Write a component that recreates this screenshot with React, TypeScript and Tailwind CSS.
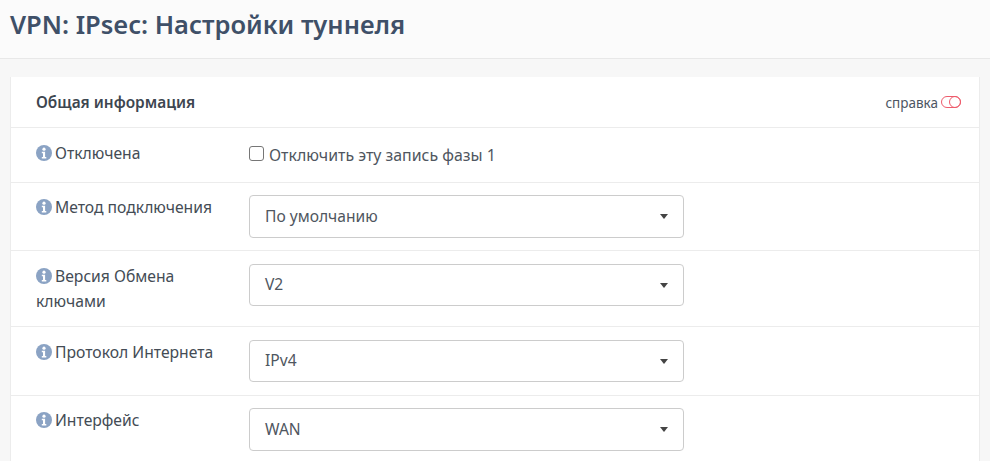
const font = "font-['Noto_Sans','Liberation_Sans',sans-serif]";

function InfoIcon() {
  return (
    <svg viewBox="0 0 16 16" className="inline-block w-4 h-4 mr-[3px] align-[-2px]">
      <circle cx="8" cy="8" r="8" fill="#8ba3c4" />
      <circle cx="8" cy="4.2" r="1.6" fill="#fff" />
      <path d="M5.8 6.8h3.3v5.1h1.2v1.5H5.8v-1.5h1.2V8.3H5.8z" fill="#fff" />
    </svg>
  );
}

function Label({ children }: { children: React.ReactNode }) {
  return (
    <div className="w-[213px] shrink-0 pr-4 text-[15.7px] leading-[25px] text-[#444c55]">
      <InfoIcon />
      {children}
    </div>
  );
}

function Select({ value }: { value: string }) {
  return (
    <div className="w-[435px] h-full flex items-center justify-between border border-[#ccc] rounded bg-white pl-[15px] pr-[15px] text-[15.6px] text-[#4f5660]">
      <span>{value}</span>
      <span className="w-0 h-0 border-x-4 border-x-transparent border-t-[5px] border-t-[#444]" />
    </div>
  );
}

const rows = [
  { label: "Метод подключения", value: "По умолчанию", h: "h-[68px]", pt: "pt-3", sh: "h-[43px]" },
  { label: "Версия Обмена ключами", value: "V2", h: "h-[76px]", pt: "pt-[13px]", sh: "h-[42px]" },
  { label: "Протокол Интернета", value: "IPv4", h: "h-[69px]", pt: "pt-[13px]", sh: "h-[42px]" },
  { label: "Интерфейс", value: "WAN", h: "h-[70px]", pt: "pt-3", sh: "h-[43px]" },
];

export default function App() {
  return (
    <div className={`${font} w-[990px] h-[461px] overflow-hidden bg-[#f7f7f7]`}>
      <div className="h-[59px] bg-[#fbfbfb] border-b border-[#e8e8e8] pl-[10px] flex items-center">
        <h1 className="text-[25.5px] font-semibold text-[#3f5068] leading-none pb-[8px]">
          VPN: IPsec: Настройки туннеля
        </h1>
      </div>
      <div className="mt-[18px] ml-[10px] w-[970px] bg-white border-x border-[#ececec]">
        <div className="h-[51px] border-b border-[#ececec] pl-[25px] pr-[18px] pt-[2px] flex items-center justify-between">
          <span className="text-[15.4px] font-semibold text-[#3d4650]">Общая информация</span>
          <div className="flex items-center text-[13.5px] text-[#4d5663]">
            <span>справка</span>
            <span className="relative ml-[3px] mb-[2px] w-[20px] h-[12px] rounded-full border border-[#ee5c6c]">
              <span className="absolute right-[-1px] top-[-1px] w-[12px] h-[12px] rounded-full border border-[#ee5c6c]" />
            </span>
          </div>
        </div>
        <div className="h-[55px] border-b border-[#ececec] pl-[25px] pt-[13px] flex">
          <Label>Отключена</Label>
          <label className="flex items-start text-[15.9px] text-[#4f5660] pt-[3px]">
            <input type="checkbox" className="w-[15px] h-[15px] mt-[2px] mr-[5px] appearance-none border border-[#767676] rounded-[3px] bg-white" />
            Отключить эту запись фазы 1
          </label>
        </div>
        {rows.map((r) => (
          <div key={r.label} className={`${r.h} border-b border-[#ececec] pl-[25px] ${r.pt} flex`}>
            <Label>{r.label}</Label>
            <div className={r.sh}>
              <Select value={r.value} />
            </div>
          </div>
        ))}
      </div>
    </div>
  );
}
